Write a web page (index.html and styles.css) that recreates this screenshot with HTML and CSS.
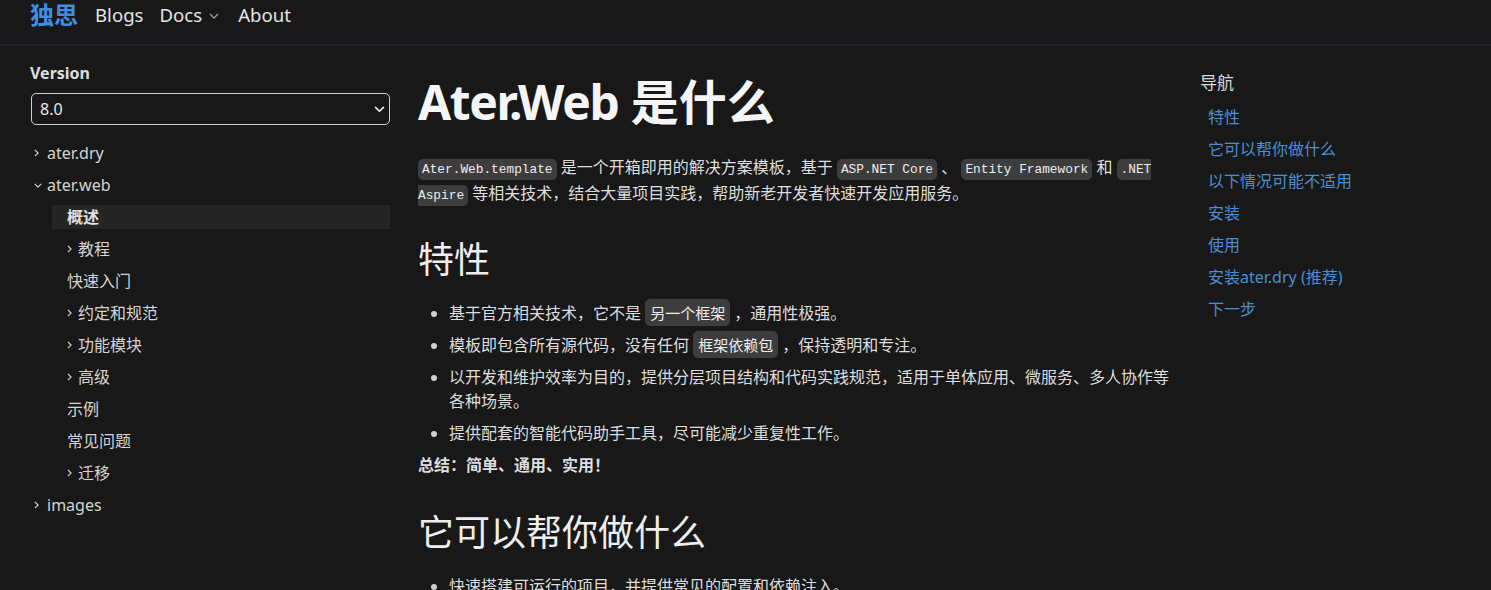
FILE: index.html
```html
<!DOCTYPE html>
<html lang="zh-CN">
<head>
<meta charset="utf-8">
<title>Ater.Web 是什么</title>
<link rel="stylesheet" href="styles.css">
</head>
<body>
<header class="topbar">
  <a class="brand" href="#">独思</a>
  <nav class="topnav">
    <a href="#">Blogs</a>
    <a href="#" class="dropdown">Docs <svg class="dd-caret" viewBox="0 0 10 6" width="10" height="6"><path d="M1 1l4 4 4-4" fill="none" stroke="#9a9a9a" stroke-width="1.3"/></svg></a>
    <a href="#">About</a>
  </nav>
</header>
<div class="layout">
  <aside class="sidebar">
    <div class="version-label">Version</div>
    <div class="select">
      <span>8.0</span>
      <svg viewBox="0 0 12 8" width="11" height="7"><path d="M1.5 1.5l4.5 4.5 4.5-4.5" fill="none" stroke="#e6e6e6" stroke-width="2" stroke-linecap="round" stroke-linejoin="round"/></svg>
    </div>
    <ul class="tree">
      <li class="row top"><span class="chev"><svg viewBox="0 0 6 10" width="5" height="8"><path d="M1 1l4 4-4 4" fill="none" stroke="#d8d8d8" stroke-width="1.4"/></svg></span>ater.dry</li>
      <li class="row top"><span class="chev"><svg viewBox="0 0 10 6" width="8" height="5"><path d="M1 1l4 4 4-4" fill="none" stroke="#d8d8d8" stroke-width="1.4"/></svg></span>ater.web</li>
      <li>
        <ul class="sub">
          <li class="row sub-row active">概述</li>
          <li class="row sub-row"><span class="chev small"><svg viewBox="0 0 6 10" width="5" height="8"><path d="M1 1l4 4-4 4" fill="none" stroke="#d8d8d8" stroke-width="1.4"/></svg></span>教程</li>
          <li class="row sub-row">快速入门</li>
          <li class="row sub-row"><span class="chev small"><svg viewBox="0 0 6 10" width="5" height="8"><path d="M1 1l4 4-4 4" fill="none" stroke="#d8d8d8" stroke-width="1.4"/></svg></span>约定和规范</li>
          <li class="row sub-row"><span class="chev small"><svg viewBox="0 0 6 10" width="5" height="8"><path d="M1 1l4 4-4 4" fill="none" stroke="#d8d8d8" stroke-width="1.4"/></svg></span>功能模块</li>
          <li class="row sub-row"><span class="chev small"><svg viewBox="0 0 6 10" width="5" height="8"><path d="M1 1l4 4-4 4" fill="none" stroke="#d8d8d8" stroke-width="1.4"/></svg></span>高级</li>
          <li class="row sub-row">示例</li>
          <li class="row sub-row">常见问题</li>
          <li class="row sub-row"><span class="chev small"><svg viewBox="0 0 6 10" width="5" height="8"><path d="M1 1l4 4-4 4" fill="none" stroke="#d8d8d8" stroke-width="1.4"/></svg></span>迁移</li>
        </ul>
      </li>
      <li class="row top"><span class="chev"><svg viewBox="0 0 6 10" width="5" height="8"><path d="M1 1l4 4-4 4" fill="none" stroke="#d8d8d8" stroke-width="1.4"/></svg></span>images</li>
    </ul>
  </aside>
  <main class="content">
    <h1><span class="latin">Ater.Web</span> 是什么</h1>
    <p class="intro"><code>Ater.Web.template</code> 是一个开箱即用的解决方案模板，基于 <code>ASP.NET Core</code> 、 <code>Entity Framework</code> 和 <code>.NET Aspire</code> 等相关技术，结合大量项目实践，帮助新老开发者快速开发应用服务。</p>
    <h2 class="h-first">特性</h2>
    <ul class="bullets">
      <li>基于官方相关技术，它不是 <code class="cjk">另一个框架</code> ，通用性极强。</li>
      <li>模板即包含所有源代码，没有任何 <code class="cjk">框架依赖包</code> ，保持透明和专注。</li>
      <li>以开发和维护效率为目的，提供分层项目结构和代码实践规范，适用于单体应用、微服务、多人协作等各种场景。</li>
      <li>提供配套的智能代码助手工具，尽可能减少重复性工作。</li>
    </ul>
    <p class="summary">总结：简单、通用、实用！</p>
    <h2 class="h-second">它可以帮你做什么</h2>
    <ul class="bullets">
      <li>快速搭建可运行的项目，并提供常见的配置和依赖注入。</li>
    </ul>
  </main>
  <aside class="toc">
    <div class="toc-title">导航</div>
    <ul class="toc-list">
      <li><a href="#">特性</a></li>
      <li><a href="#">它可以帮你做什么</a></li>
      <li><a href="#">以下情况可能不适用</a></li>
      <li><a href="#">安装</a></li>
      <li><a href="#">使用</a></li>
      <li><a href="#">安装ater.dry (推荐)</a></li>
      <li><a href="#">下一步</a></li>
    </ul>
  </aside>
</div>
</body>
</html>
```

FILE: styles.css
```css
* { box-sizing: border-box; }
html, body { margin: 0; padding: 0; }
body {
  background: #181818;
  color: #dcdcdc;
  font-family: "Noto Sans", "Noto Sans CJK SC", sans-serif;
  font-size: 16px;
  overflow: hidden;
}
a { text-decoration: none; color: inherit; }
ul { list-style: none; margin: 0; padding: 0; }

.topbar {
  height: 46px;
  border-bottom: 2px solid #1f2329;
  display: flex;
  align-items: flex-start;
  padding-left: 30px;
}
.brand {
  color: #3f8fe0;
  font-weight: 700;
  font-size: 24px;
  line-height: 30px;
}
.topnav {
  display: flex;
  margin-left: 17px;
  gap: 16px;
  font-size: 18.6px;
  line-height: 30px;
  color: #e4e4e4;
}
.topnav a { display: flex; align-items: center; }
.dropdown { margin-right: 3px; }
.dd-caret { margin-left: 7px; margin-top: 2px; }

.layout {
  display: grid;
  grid-template-columns: 360px 752px auto;
  column-gap: 28px;
  padding-left: 30px;
}
.layout > .toc { margin-left: 2px; }

.sidebar { padding-top: 15px; }
.version-label {
  font-weight: 700;
  font-size: 16px;
  line-height: 24px;
  color: #dedede;
}
.select {
  margin-top: 8px;
  height: 32px;
  border: 1px solid #cfcfcf;
  border-radius: 5px;
  display: flex;
  align-items: center;
  justify-content: space-between;
  padding: 0 4px 0 8px;
  margin-left: 1px;
  font-size: 16px;
  color: #e8e8e8;
}
.tree { margin-top: 16px; font-size: 16px; color: #d4d4d4; }
.row {
  line-height: 24px;
  height: 24px;
  margin-bottom: 8px;
  display: flex;
  align-items: center;
}
.top { padding-left: 4px; }
.chev { width: 13px; display: inline-flex; align-items: center; }
.chev.small { width: 11px; }
.sub { margin-left: 22px; }
.sub-row { padding-left: 15px; }
.active { background: #252525; font-weight: 700; color: #e2e2e2; }

.content { padding-top: 27px; color: #dedede; }
.content h1 {
  margin: 0;
  font-size: 48px;
  line-height: 1.2;
  font-weight: 700;
  color: #f4f5f7;
}
.latin { letter-spacing: -1.4px; }
.intro {
  margin: 23px 0 0;
  line-height: 26px;
  font-size: 16px;
}
code {
  font-family: "Liberation Mono", "Noto Sans CJK SC", monospace;
  font-size: 12.8px;
  line-height: 1;
  background: #3d3d3d;
  color: #ededed;
  border-radius: 5px;
  padding: 3px 4px;
}
code.cjk { font-family: "Noto Sans CJK SC", sans-serif; font-size: 15px; padding: 3px 5px; }
.content h2 {
  margin: 0;
  font-size: 36px;
  line-height: 43px;
  font-weight: 400;
  color: #eeeeee;
}
.h-first { margin-top: 32px !important; }
.h-second { margin-top: 34px !important; }
.bullets {
  list-style: disc;
  padding-left: 31px;
  margin-top: 20px;
}
.bullets li {
  line-height: 24px;
  margin-bottom: 8px;
}
.bullets li::marker { color: #cfcfcf; }
.summary {
  margin: 1px 0 0;
  line-height: 24px;
  font-weight: 700;
}

.toc { padding-top: 25px; }
.toc-title {
  font-size: 17px;
  line-height: 24px;
  color: #d8d8d8;
}
.toc-list { margin-top: 10px; padding-left: 8px; }
.toc-list li { line-height: 24px; margin-bottom: 8px; }
.toc-list a { color: #4a8fd2; font-size: 16px; }
```
